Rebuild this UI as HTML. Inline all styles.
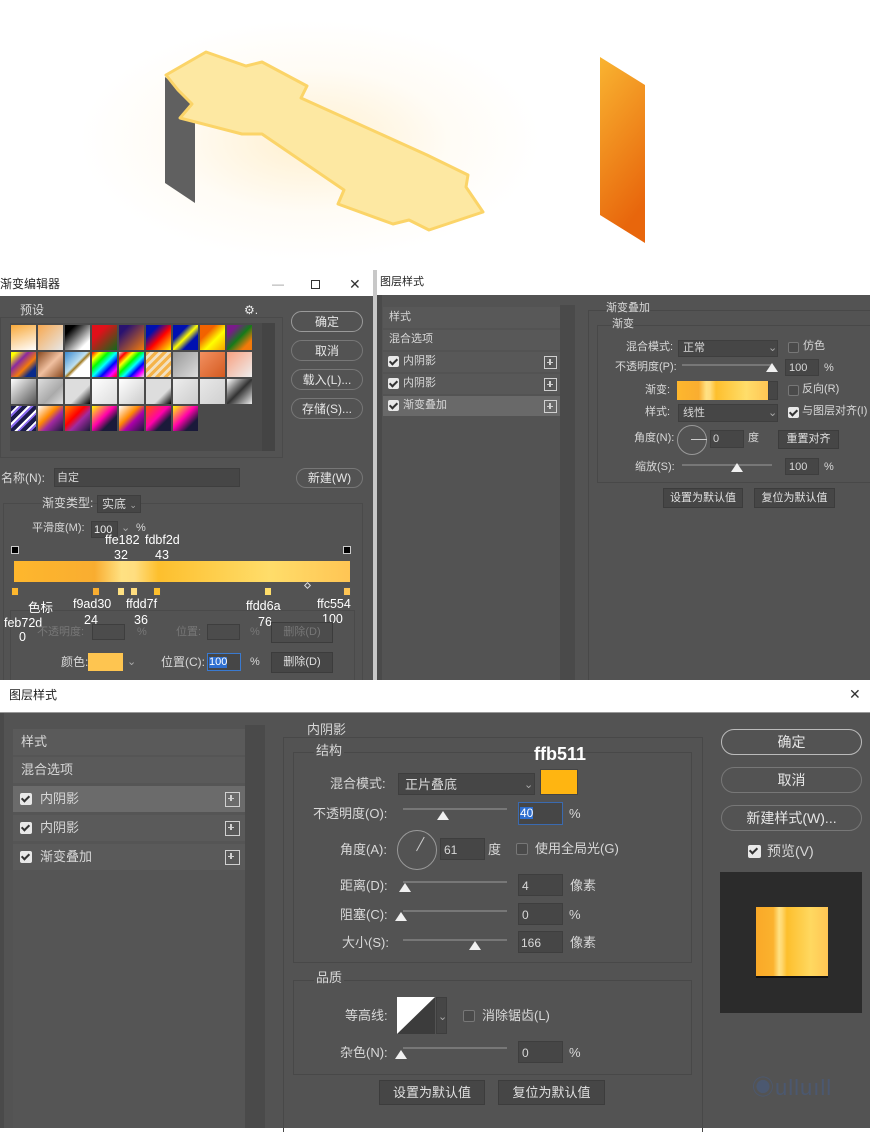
<!DOCTYPE html>
<html><head><meta charset="utf-8">
<style>
*{margin:0;padding:0;box-sizing:border-box}
body{width:870px;height:1128px;position:relative;overflow:hidden;background:#fff;font-family:"Liberation Sans","Noto Sans CJK SC",sans-serif;color:#d8d8d8}
div,span{position:absolute}
.t{white-space:nowrap;line-height:1}
.s11{font-size:11px}.s12{font-size:12px}.s13{font-size:13px}.s14{font-size:14px}
.bx{border:1px solid #6a6a6a}
.in{background:#464646;border:1px solid #3e3e3e}
.btn{border:1.5px solid #9a9a9a;border-radius:11px;text-align:center;color:#e6e6e6}
.fbtn{background:#464646;border:1px solid #3c3c3c;text-align:center;color:#e0e0e0}
.cb{width:11px;height:11px;background:#e8e8e8;border-radius:2px}
.cb::after{content:"";position:absolute;left:3px;top:1px;width:3px;height:6px;border:solid #333;border-width:0 2px 2px 0;transform:rotate(45deg)}
.ucb{width:11px;height:11px;border:1px solid #777;background:#4a4a4a;border-radius:2px}
.plus{width:13px;height:13px;border:1.5px solid #d0d0d0}
.plus::before{content:"";position:absolute;left:2px;top:4.5px;width:6px;height:1.5px;background:#d0d0d0}
.plus::after{content:"";position:absolute;left:4.3px;top:2px;width:1.5px;height:6px;background:#d0d0d0}
.thumb{width:0;height:0;border-left:6px solid transparent;border-right:6px solid transparent;border-bottom:9px solid #f0f0f0}
.sl{height:2px;background:#777}
.sw{width:25px;height:25px}
.stop{width:8px;height:9px;background:#fec550;border:1px solid #555}
.lab{color:#fff;font-size:12.5px}
</style></head><body>

<!-- top illustration -->
<div style="left:60px;top:0;width:500px;height:270px;background:radial-gradient(ellipse 230px 120px at 50% 52%,rgba(255,225,160,.5),rgba(255,240,210,.22) 60%,rgba(255,255,255,0) 100%)"></div>
<svg style="position:absolute;left:0;top:0" width="870" height="270">
<polygon points="165,77 165,183 195,203 195,100" fill="#606060"/>
<polygon points="166,75 206,52 246,66 262,62 307,86 301,98 427,155 468,175 466,187 483,212 429,230 409,220 393,224 338,204 344,190 262,134 242,134 180,118 192,104 178,90" fill="#fde8a2" stroke="#fbd468" stroke-width="3" stroke-linejoin="round"/>
<defs><linearGradient id="og" x1="0" y1="0" x2="0.3" y2="1"><stop offset="0" stop-color="#f9b431"/><stop offset="1" stop-color="#e8660c"/></linearGradient></defs>
<polygon points="600,57 645,85 645,243 600,215" fill="url(#og)"/>
</svg>

<!-- gradient editor -->
<div style="left:0;top:270px;width:373px;height:26px;background:#fff"></div>
<div class="t s12" style="left:0;top:278px;color:#222">渐变编辑器</div>
<div class="t s12" style="left:272px;top:278px;color:#999">—</div>
<div style="left:311px;top:280px;width:9px;height:9px;border:1px solid #333"></div>
<div class="t s14" style="left:349px;top:277px;color:#333">✕</div>
<div style="left:0;top:296px;width:373px;height:384px;background:#535353"></div>
<div class="bx" style="left:0;top:317px;width:283px;height:141px;border-color:#4a4a4a"></div>
<div class="t s12" style="left:18px;top:304px;background:#535353;padding:0 2px">预设</div>
<div class="t s12" style="left:244px;top:304px;color:#eee">⚙.</div>
<div style="left:10px;top:323px;width:265px;height:128px;background:#4a4a4a"></div>
<div style="left:262px;top:323px;width:13px;height:128px;background:#444"></div>
<div class="sw" style="left:11px;top:325px;background:linear-gradient(160deg,#f8a93a,#fff)"></div>
<div class="sw" style="left:38px;top:325px;background:linear-gradient(135deg,#f7a850,#e7e7e7)"></div>
<div class="sw" style="left:65px;top:325px;background:linear-gradient(135deg,#000 20%,#fff 80%)"></div>
<div class="sw" style="left:92px;top:325px;background:linear-gradient(135deg,#e0101a 30%,#0f6a1a)"></div>
<div class="sw" style="left:119px;top:325px;background:linear-gradient(135deg,#2a1270 20%,#f47c0a)"></div>
<div class="sw" style="left:146px;top:325px;background:linear-gradient(135deg,#0010b0 25%,#f00 55%,#ff0)"></div>
<div class="sw" style="left:173px;top:325px;background:linear-gradient(135deg,#0010b0 30%,#ff0 50%,#0010b0 70%)"></div>
<div class="sw" style="left:200px;top:325px;background:linear-gradient(135deg,#f26200 30%,#ff0 60%,#f7a000)"></div>
<div class="sw" style="left:227px;top:325px;background:linear-gradient(135deg,#7a1a8a 20%,#157a1a 50%,#f37a0a 80%)"></div>
<div class="sw" style="left:11px;top:352px;background:linear-gradient(135deg,#ff0 10%,#8a2aa0 35%,#f47a0a 60%,#0a2a8a 80%)"></div>
<div class="sw" style="left:38px;top:352px;background:linear-gradient(135deg,#8a4a20,#f0c0a0 50%,#8a4a20)"></div>
<div class="sw" style="left:65px;top:352px;background:linear-gradient(135deg,#3a8ad0,#bfe0f0 45%,#a07a20 52%,#fff 60%)"></div>
<div class="sw" style="left:92px;top:352px;background:linear-gradient(135deg,red,#ff0,#0f0,#0ff,#00f,#f0f,red)"></div>
<div class="sw" style="left:119px;top:352px;background:linear-gradient(135deg,#ddd,red,#ff0,#0f0,#0ff,#00f,#f0f,#ddd)"></div>
<div class="sw" style="left:146px;top:352px;background:repeating-linear-gradient(135deg,#f5b34a 0 3px,#f3e0c0 3px 6px)"></div>
<div class="sw" style="left:173px;top:352px;background:linear-gradient(135deg,#999,#ddd)"></div>
<div class="sw" style="left:200px;top:352px;background:linear-gradient(135deg,#f29060,#d45a20)"></div>
<div class="sw" style="left:227px;top:352px;background:linear-gradient(135deg,#f8a080,#eee)"></div>
<div class="sw" style="left:11px;top:379px;background:linear-gradient(135deg,#fff,#555)"></div>
<div class="sw" style="left:38px;top:379px;background:linear-gradient(135deg,#ddd,#aaa 60%,#ddd)"></div>
<div class="sw" style="left:65px;top:379px;background:linear-gradient(135deg,#ddd 60%,#000)"></div>
<div class="sw" style="left:92px;top:379px;background:linear-gradient(135deg,#fff,#ddd)"></div>
<div class="sw" style="left:119px;top:379px;background:linear-gradient(135deg,#fff,#ccc)"></div>
<div class="sw" style="left:146px;top:379px;background:linear-gradient(135deg,#ddd 65%,#000)"></div>
<div class="sw" style="left:173px;top:379px;background:linear-gradient(135deg,#eee,#ccc)"></div>
<div class="sw" style="left:200px;top:379px;background:linear-gradient(135deg,#e8e8e8,#d0d0d0)"></div>
<div class="sw" style="left:227px;top:379px;background:linear-gradient(135deg,#fff,#333 50%,#eee)"></div>
<div class="sw" style="left:11px;top:406px;background:repeating-linear-gradient(135deg,#1a1a4a 0 4px,#fff 4px 6px,#8a6af0 6px 8px)"></div>
<div class="sw" style="left:38px;top:406px;background:linear-gradient(135deg,#fff,#f80 40%,#a02aa0 60%,#1a1a3a)"></div>
<div class="sw" style="left:65px;top:406px;background:linear-gradient(135deg,#f80,red 40%,#a02aa0 60%,#1a1a3a)"></div>
<div class="sw" style="left:92px;top:406px;background:linear-gradient(135deg,#ff0,#f0a 45%,#1a1a3a 70%)"></div>
<div class="sw" style="left:119px;top:406px;background:linear-gradient(135deg,#fff,#f80 40%,#a0a 60%,#1a1a3a)"></div>
<div class="sw" style="left:146px;top:406px;background:linear-gradient(135deg,#f50,#f0a 45%,#1a1a3a 70%)"></div>
<div class="sw" style="left:173px;top:406px;background:linear-gradient(135deg,#ff0,#f0a 45%,#1a1a3a 75%)"></div>

<div class="btn t s12" style="left:291px;top:311px;width:72px;height:21px;padding-top:4px">确定</div>
<div class="btn t s12" style="left:291px;top:340px;width:72px;height:21px;padding-top:4px;border-color:#777">取消</div>
<div class="btn t s12" style="left:291px;top:369px;width:72px;height:21px;padding-top:4px;border-color:#777">载入(L)...</div>
<div class="btn t s12" style="left:291px;top:398px;width:72px;height:21px;padding-top:4px;border-color:#777">存储(S)...</div>

<div class="t s12" style="left:1px;top:472px">名称(N):</div>
<div class="in" style="left:54px;top:468px;width:186px;height:19px"></div>
<div class="t s11" style="left:57px;top:473px">自定</div>
<div class="btn t s12" style="left:296px;top:468px;width:67px;height:20px;padding-top:3px;border-color:#777">新建(W)</div>

<div class="bx" style="left:3px;top:503px;width:360px;height:180px;border-color:#4a4a4a"></div>
<div class="t s12" style="left:42px;top:497px;background:#535353">渐变类型:</div>
<div class="in" style="left:97px;top:495px;width:44px;height:18px"></div>
<div class="t s12" style="left:102px;top:498px">实底 <span style="position:static;font-size:9px;color:#aaa">⌄</span></div>
<div class="t s11" style="left:32px;top:523px">平滑度(M):</div>
<div class="in" style="left:91px;top:521px;width:27px;height:17px"></div>
<div class="t s11" style="left:94px;top:525px;color:#eee">100</div>
<div class="t s11" style="left:121px;top:523px;color:#aaa">⌄</div>
<div class="t s11" style="left:136px;top:523px">%</div>

<div class="t lab" style="left:105px;top:534px">ffe182</div>
<div class="t lab" style="left:114px;top:549px">32</div>
<div class="t lab" style="left:145px;top:534px">fdbf2d</div>
<div class="t lab" style="left:155px;top:549px">43</div>
<div style="left:11px;top:546px;width:8px;height:8px;background:#000;border:1px solid #ccc"></div>
<div style="left:343px;top:546px;width:8px;height:8px;background:#000;border:1px solid #ccc"></div>
<div style="left:14px;top:561px;width:336px;height:21px;background:linear-gradient(to right,#feb72d 0%,#f9ad30 24%,#ffe182 32%,#ffdd7f 36%,#fdbf2d 43%,#ffdd6a 76%,#ffc554 100%)"></div>
<div class="stop" style="left:11px;top:587px;background:#feb72d"></div>
<div class="stop" style="left:92px;top:587px;background:#f9ad30"></div>
<div class="stop" style="left:117px;top:587px;background:#ffe182"></div>
<div class="stop" style="left:130px;top:587px;background:#ffdd7f"></div>
<div class="stop" style="left:153px;top:587px;background:#fdbf2d"></div>
<div class="stop" style="left:264px;top:587px;background:#ffdd6a"></div>
<div class="stop" style="left:343px;top:587px;background:#ffc554"></div>
<div style="left:305px;top:583px;width:5px;height:5px;border:1px solid #ddd;transform:rotate(45deg)"></div>

<div class="bx" style="left:10px;top:610px;width:345px;height:72px;border-color:#4a4a4a"></div>
<div class="t lab" style="left:28px;top:602px">色标</div>
<div class="t lab" style="left:4px;top:617px">feb72d</div>
<div class="t lab" style="left:19px;top:631px">0</div>
<div class="t lab" style="left:73px;top:598px">f9ad30</div>
<div class="t lab" style="left:84px;top:614px">24</div>
<div class="t lab" style="left:126px;top:598px">ffdd7f</div>
<div class="t lab" style="left:134px;top:614px">36</div>
<div class="t lab" style="left:246px;top:600px">ffdd6a</div>
<div class="t lab" style="left:258px;top:616px">76</div>
<div class="t lab" style="left:317px;top:598px">ffc554</div>
<div class="t lab" style="left:322px;top:613px">100</div>
<div class="t s11" style="left:37px;top:627px;color:#777">不透明度:</div>
<div class="in" style="left:92px;top:624px;width:33px;height:16px;background:#4c4c4c"></div>
<div class="t s11" style="left:137px;top:627px;color:#777">%</div>
<div class="t s11" style="left:176px;top:627px;color:#777">位置:</div>
<div class="in" style="left:207px;top:624px;width:33px;height:16px;background:#4c4c4c"></div>
<div class="t s11" style="left:250px;top:627px;color:#777">%</div>
<div class="fbtn t s11" style="left:271px;top:622px;width:62px;height:21px;padding-top:4px;color:#777;background:#4c4c4c">删除(D)</div>
<div class="t s12" style="left:61px;top:656px">颜色:</div>
<div style="left:88px;top:653px;width:35px;height:18px;background:#fec550"></div>
<div class="t s11" style="left:127px;top:657px;color:#aaa">⌄</div>
<div class="t s12" style="left:161px;top:656px">位置(C):</div>
<div class="in" style="left:207px;top:653px;width:34px;height:18px;border:1px solid #3a7ad0"></div>
<div class="t s11" style="left:209px;top:657px;background:#2f6fd0;color:#fff">100</div>
<div class="t s11" style="left:250px;top:657px">%</div>
<div class="fbtn t s11" style="left:271px;top:652px;width:62px;height:21px;padding-top:4px">删除(D)</div>

<!-- layer style mid -->
<div style="left:373px;top:270px;width:4px;height:410px;background:#c8c8c8"></div>
<div style="left:377px;top:270px;width:493px;height:25px;background:#fff"></div>
<div class="t s11" style="left:380px;top:277px;color:#222">图层样式</div>
<div style="left:377px;top:295px;width:493px;height:385px;background:#535353"></div>
<div style="left:377px;top:295px;width:5px;height:385px;background:#4a4a4a"></div>
<div style="left:560px;top:305px;width:15px;height:375px;background:#4a4a4a"></div>
<div style="left:383px;top:307px;width:177px;height:21px;background:#585858"></div>
<div class="t s11" style="left:389px;top:312px">样式</div>
<div style="left:383px;top:330px;width:177px;height:20px;background:#585858"></div>
<div class="t s11" style="left:389px;top:334px">混合选项</div>
<div style="left:383px;top:352px;width:177px;height:20px;background:#585858"></div>
<div class="cb" style="left:388px;top:356px"></div><div class="t s11" style="left:403px;top:356px">内阴影</div><div class="plus" style="left:544px;top:356px"></div>
<div style="left:383px;top:374px;width:177px;height:20px;background:#585858"></div>
<div class="cb" style="left:388px;top:378px"></div><div class="t s11" style="left:403px;top:378px">内阴影</div><div class="plus" style="left:544px;top:378px"></div>
<div style="left:383px;top:396px;width:177px;height:20px;background:#696969"></div>
<div class="cb" style="left:388px;top:400px"></div><div class="t s11" style="left:403px;top:400px">渐变叠加</div><div class="plus" style="left:544px;top:400px"></div>

<div class="bx" style="left:588px;top:310px;width:290px;height:375px;border-color:#484848"></div>
<div class="t s11" style="left:606px;top:303px;background:#535353">渐变叠加</div>
<div class="bx" style="left:597px;top:325px;width:280px;height:158px;border-color:#484848"></div>
<div class="t s11" style="left:612px;top:319px;background:#535353">渐变</div>
<div class="t s11" style="left:626px;top:342px">混合模式:</div>
<div class="in" style="left:678px;top:340px;width:100px;height:17px"></div>
<div class="t s11" style="left:683px;top:343px">正常</div><div class="t s11" style="left:768px;top:343px;color:#aaa">⌄</div>
<div class="ucb" style="left:788px;top:342px"></div><div class="t s11" style="left:803px;top:341px">仿色</div>
<div class="t s11" style="left:615px;top:362px">不透明度(P):</div>
<div class="sl" style="left:682px;top:364px;width:90px"></div><div class="thumb" style="left:766px;top:363px"></div>
<div class="in" style="left:785px;top:359px;width:34px;height:17px"></div>
<div class="t s11" style="left:789px;top:363px">100</div><div class="t s11" style="left:824px;top:363px">%</div>
<div class="t s11" style="left:645px;top:385px">渐变:</div>
<div style="left:677px;top:381px;width:91px;height:19px;background:linear-gradient(to right,#feb72d 0%,#f9ad30 24%,#ffe182 32%,#ffdd7f 36%,#fdbf2d 43%,#ffdd6a 76%,#ffc554 100%)"></div>
<div class="in" style="left:768px;top:381px;width:10px;height:19px"></div>
<div class="ucb" style="left:788px;top:385px"></div><div class="t s11" style="left:802px;top:384px">反向(R)</div>
<div class="t s11" style="left:645px;top:407px">样式:</div>
<div class="in" style="left:678px;top:404px;width:100px;height:18px"></div>
<div class="t s11" style="left:683px;top:408px">线性</div><div class="t s11" style="left:768px;top:408px;color:#aaa">⌄</div>
<div class="cb" style="left:788px;top:407px"></div><div class="t s11" style="left:802px;top:406px">与图层对齐(I)</div>
<div class="t s11" style="left:634px;top:433px">角度(N):</div>
<div style="left:677px;top:425px;width:30px;height:30px;border:1px solid #999;border-radius:50%"></div>
<div style="left:691px;top:439px;width:16px;height:1px;background:#ccc"></div>
<div class="in" style="left:710px;top:430px;width:34px;height:18px"></div>
<div class="t s11" style="left:713px;top:434px">0</div><div class="t s11" style="left:748px;top:433px">度</div>
<div class="fbtn t s11" style="left:778px;top:430px;width:61px;height:19px;padding-top:3px">重置对齐</div>
<div class="t s11" style="left:635px;top:462px">缩放(S):</div>
<div class="sl" style="left:682px;top:464px;width:90px"></div><div class="thumb" style="left:731px;top:463px"></div>
<div class="in" style="left:785px;top:458px;width:34px;height:17px"></div>
<div class="t s11" style="left:789px;top:462px">100</div><div class="t s11" style="left:824px;top:462px">%</div>
<div class="fbtn t s11" style="left:663px;top:488px;width:80px;height:20px;padding-top:4px">设置为默认值</div>
<div class="fbtn t s11" style="left:754px;top:488px;width:81px;height:20px;padding-top:4px">复位为默认值</div>

<!-- bottom dialog -->
<div style="left:0;top:680px;width:870px;height:33px;background:#fff;border-bottom:1px solid #999"></div>
<div class="t s12" style="left:9px;top:689px;color:#222">图层样式</div>
<div class="t s14" style="left:849px;top:687px;color:#333">✕</div>
<div style="left:0;top:713px;width:870px;height:415px;background:#535353"></div>
<div style="left:0;top:713px;width:4px;height:415px;background:#4a4a4a"></div>
<div style="left:245px;top:725px;width:20px;height:403px;background:#4a4a4a"></div>
<div style="left:13px;top:729px;width:232px;height:399px;background:#555"></div>
<div style="left:13px;top:729px;width:232px;height:26px;background:#5a5a5a"></div>
<div class="t s13" style="left:21px;top:735px">样式</div>
<div style="left:13px;top:757px;width:232px;height:26px;background:#5a5a5a"></div>
<div class="t s13" style="left:21px;top:763px">混合选项</div>
<div style="left:13px;top:786px;width:232px;height:26px;background:#6b6b6b"></div>
<div class="cb" style="left:20px;top:793px;width:12px;height:12px"></div><div class="t s13" style="left:40px;top:792px">内阴影</div><div class="plus" style="left:225px;top:792px;width:15px;height:15px"></div>
<div style="left:13px;top:815px;width:232px;height:26px;background:#5a5a5a"></div>
<div class="cb" style="left:20px;top:822px;width:12px;height:12px"></div><div class="t s13" style="left:40px;top:821px">内阴影</div><div class="plus" style="left:225px;top:821px;width:15px;height:15px"></div>
<div style="left:13px;top:844px;width:232px;height:26px;background:#5a5a5a"></div>
<div class="cb" style="left:20px;top:851px;width:12px;height:12px"></div><div class="t s13" style="left:40px;top:850px">渐变叠加</div><div class="plus" style="left:225px;top:850px;width:15px;height:15px"></div>

<div class="bx" style="left:283px;top:737px;width:420px;height:395px;border-color:#484848;border-bottom:none"></div>
<div class="t s13" style="left:305px;top:723px;background:#535353;padding:0 2px">内阴影</div>
<div class="bx" style="left:293px;top:752px;width:399px;height:211px;border-color:#484848"></div>
<div class="t s13" style="left:314px;top:744px;background:#535353;padding:0 2px">结构</div>
<div class="t" style="left:534px;top:745px;font-size:18px;font-weight:bold;color:#fff">ffb511</div>
<div class="t s13" style="left:330px;top:777px">混合模式:</div>
<div class="in" style="left:398px;top:773px;width:137px;height:22px"></div>
<div class="t s13" style="left:405px;top:778px">正片叠底</div><div class="t s11" style="left:524px;top:780px;color:#aaa">⌄</div>
<div style="left:540px;top:769px;width:38px;height:26px;background:#ffb511;border:1px solid #444"></div>
<div class="t s13" style="left:313px;top:807px">不透明度(O):</div>
<div class="sl" style="left:403px;top:808px;width:104px"></div><div class="thumb" style="left:437px;top:811px"></div>
<div class="in" style="left:518px;top:802px;width:45px;height:23px;border:1px solid #3a6ab0"></div>
<div class="t s12" style="left:520px;top:807px;background:#2f6fd0;color:#fff">40</div><div class="t s13" style="left:569px;top:807px">%</div>
<div class="t s13" style="left:340px;top:843px">角度(A):</div>
<div style="left:397px;top:830px;width:40px;height:40px;border:1px solid #999;border-radius:50%"></div>
<div style="left:416px;top:835px;width:1px;height:16px;background:#ccc;transform-origin:bottom;transform:rotate(29deg)"></div>
<div class="in" style="left:440px;top:838px;width:45px;height:22px"></div>
<div class="t s12" style="left:444px;top:844px">61</div><div class="t s13" style="left:488px;top:843px">度</div>
<div class="ucb" style="left:516px;top:843px;width:12px;height:12px"></div><div class="t s13" style="left:535px;top:842px">使用全局光(G)</div>
<div class="t s13" style="left:340px;top:879px">距离(D):</div>
<div class="sl" style="left:403px;top:881px;width:104px"></div><div class="thumb" style="left:399px;top:883px"></div>
<div class="in" style="left:518px;top:874px;width:45px;height:22px"></div>
<div class="t s12" style="left:522px;top:880px">4</div><div class="t s13" style="left:570px;top:879px">像素</div>
<div class="t s13" style="left:340px;top:908px">阻塞(C):</div>
<div class="sl" style="left:403px;top:910px;width:104px"></div><div class="thumb" style="left:395px;top:912px"></div>
<div class="in" style="left:518px;top:903px;width:45px;height:22px"></div>
<div class="t s12" style="left:522px;top:909px">0</div><div class="t s13" style="left:569px;top:908px">%</div>
<div class="t s13" style="left:342px;top:936px">大小(S):</div>
<div class="sl" style="left:403px;top:939px;width:104px"></div><div class="thumb" style="left:469px;top:941px"></div>
<div class="in" style="left:518px;top:931px;width:45px;height:22px"></div>
<div class="t s12" style="left:521px;top:937px">166</div><div class="t s13" style="left:570px;top:936px">像素</div>

<div class="bx" style="left:293px;top:980px;width:399px;height:95px;border-color:#484848"></div>
<div class="t s13" style="left:314px;top:971px;background:#535353;padding:0 2px">品质</div>
<div class="t s13" style="left:345px;top:1009px">等高线:</div>
<svg style="position:absolute;left:397px;top:997px" width="38" height="37"><rect width="38" height="37" fill="#3c3c3c"/><polygon points="0,0 38,0 0,37" fill="#fff"/></svg>
<div class="in" style="left:436px;top:997px;width:11px;height:37px"></div>
<div class="t s11" style="left:438px;top:1012px;color:#aaa">⌄</div>
<div class="ucb" style="left:463px;top:1010px;width:12px;height:12px"></div><div class="t s13" style="left:482px;top:1009px">消除锯齿(L)</div>
<div class="t s13" style="left:340px;top:1046px">杂色(N):</div>
<div class="sl" style="left:403px;top:1047px;width:104px"></div><div class="thumb" style="left:395px;top:1050px"></div>
<div class="in" style="left:518px;top:1041px;width:45px;height:22px"></div>
<div class="t s12" style="left:522px;top:1047px">0</div><div class="t s13" style="left:569px;top:1046px">%</div>
<div class="fbtn t s13" style="left:379px;top:1080px;width:106px;height:25px;padding-top:5px">设置为默认值</div>
<div class="fbtn t s13" style="left:498px;top:1080px;width:107px;height:25px;padding-top:5px">复位为默认值</div>

<div class="btn t s14" style="left:721px;top:729px;width:141px;height:26px;padding-top:5px;border-radius:13px;border-color:#bbb">确定</div>
<div class="btn t s14" style="left:721px;top:767px;width:141px;height:26px;padding-top:5px;border-radius:13px;border-color:#777">取消</div>
<div class="btn t s14" style="left:721px;top:805px;width:141px;height:26px;padding-top:5px;border-radius:13px;border-color:#777">新建样式(W)...</div>
<div class="cb" style="left:748px;top:845px;width:13px;height:13px"></div><div class="t s14" style="left:767px;top:844px">预览(V)</div>
<div style="left:720px;top:872px;width:142px;height:141px;background:#2b2b2b"></div>
<div style="left:756px;top:907px;width:72px;height:71px;background:linear-gradient(to right,#f9a928 0%,#fbb22e 24%,#ffe182 32%,#ffd870 36%,#fdbf2d 43%,#ffd860 76%,#ffc554 100%);border-bottom:2px solid #111"></div>
<div class="t" style="left:752px;top:1077px;font-size:22px;color:#4a5a78;opacity:.8;letter-spacing:1px">◉ulluıll</div>
</body></html>
